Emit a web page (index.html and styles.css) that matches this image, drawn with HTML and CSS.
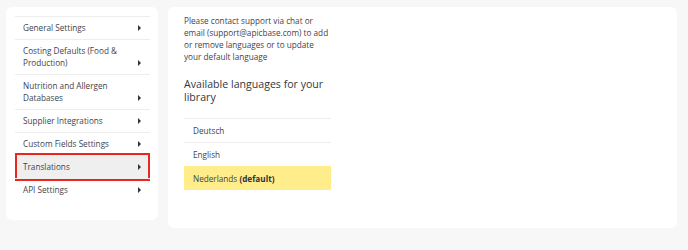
FILE: index.html
```html
<!DOCTYPE html>
<html lang="en">
<head>
    <meta charset="UTF-8">
    <meta name="viewport" content="width=device-width, initial-scale=1.0">
    <title>Settings - Translations</title>
    <link rel="stylesheet" href="styles.css">
</head>
<body>
    <div class="page">
        <div class="card side-card">
            <ul class="side-menu">
                <li class="menu-item"><span>General Settings</span><i class="arrow"></i></li>
                <li class="menu-item"><span>Costing Defaults (Food &amp; Production)</span><i class="arrow"></i></li>
                <li class="menu-item"><span>Nutrition and Allergen Databases</span><i class="arrow"></i></li>
                <li class="menu-item"><span>Supplier Integrations</span><i class="arrow"></i></li>
                <li class="menu-item"><span>Custom Fields Settings</span><i class="arrow"></i></li>
                <li class="menu-item active"><span>Translations</span><i class="arrow"></i></li>
                <li class="menu-item"><span>API Settings</span><i class="arrow"></i></li>
            </ul>
        </div>
        <div class="card main-card">
            <div class="content">
                <p class="info">Please contact support via chat or email (support@apicbase.com) to add or remove languages or to update your default language</p>
                <h2 class="title">Available languages for your library</h2>
                <ul class="lang-list">
                    <li class="lang">Deutsch</li>
                    <li class="lang">English</li>
                    <li class="lang default">Nederlands <b>(default)</b></li>
                </ul>
            </div>
        </div>
    </div>
</body>
</html>
```

FILE: styles.css
```css
body {
    margin: 0;
    background: #f7f7f7;
    font-family: "Open Sans", "Liberation Sans", sans-serif;
    color: #3f434a;
}
.page {
    display: flex;
    align-items: flex-start;
    gap: 10px;
    padding: 7px 11px 0 6px;
}
.card {
    background: #fff;
    border-radius: 6px;
}
.side-card {
    width: 135px;
    padding: 9px 8px 19px 9px;
}
.side-menu {
    list-style: none;
    margin: 0;
    padding: 0;
}
.menu-item {
    position: relative;
    display: flex;
    align-items: flex-end;
    justify-content: space-between;
    border-top: 1px solid #eeeeee;
    padding: 5px 9px 5px 8px;
    font-size: 8.2px;
    line-height: 12px;
}
.menu-item span {
    max-width: 100px;
}
.arrow {
    width: 0;
    height: 0;
    border-left: 3px solid #2f333a;
    border-top: 3px solid transparent;
    border-bottom: 3px solid transparent;
    margin-bottom: 3px;
}
.menu-item.active {
    background: #efefef;
}
.menu-item.active::after {
    content: "";
    position: absolute;
    top: -3px;
    bottom: -3px;
    left: 0;
    right: 0;
    border: 2px solid #e8281e;
}
.main-card {
    flex: 1;
    height: 221px;
    box-sizing: border-box;
    padding: 8px 16px;
}
.content {
    width: 147px;
}
.info {
    margin: 0;
    font-size: 8.2px;
    line-height: 12px;
}
.title {
    margin: 15px 0 14px;
    font-size: 10.6px;
    line-height: 13px;
    font-weight: normal;
    color: #33373d;
}
.lang-list {
    list-style: none;
    margin: 0;
    padding: 0;
}
.lang {
    border-top: 1px solid #eeeeee;
    padding: 6px 9px 5px;
    font-size: 8.2px;
    line-height: 12px;
}
.lang.default {
    background: #ffec8a;
    border-top-color: #ffec8a;
}
.lang b {
    font-weight: bold;
    color: #2f333a;
}
```
